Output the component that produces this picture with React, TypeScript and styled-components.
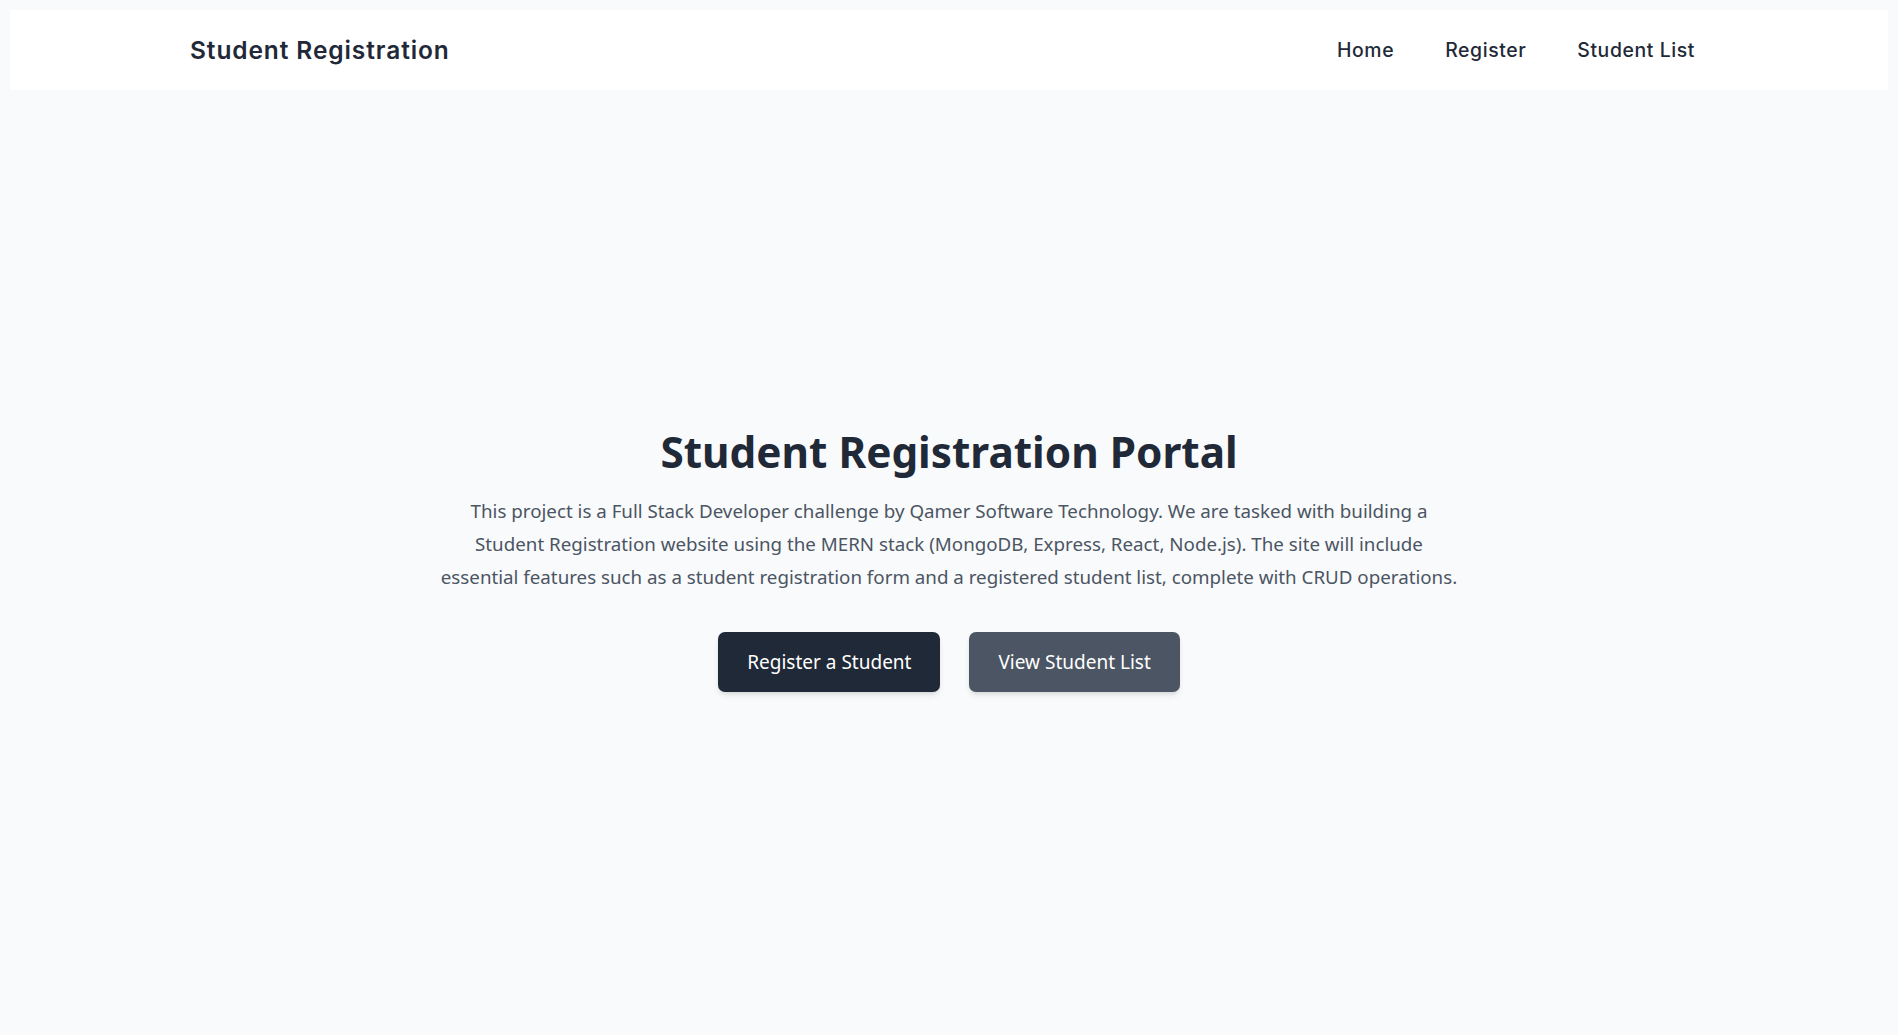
import React from "react";
import styled, { createGlobalStyle } from "styled-components";

const GlobalStyle = createGlobalStyle`
  html, body {
    background: #f9fafb;
  }
  body {
    margin: 10px;
    font-family: "Noto Sans", "Open Sans", sans-serif;
    color: #1f2937;
  }
  * { box-sizing: border-box; }
`;

const Header = styled.header`
  height: 80px;
  background: #ffffff;
  display: flex;
  align-items: center;
`;

const HeaderInner = styled.div`
  width: 100%;
  max-width: 1518px;
  margin: 0 auto;
  display: flex;
  align-items: center;
  justify-content: space-between;
`;

const Brand = styled.a`
  font-family: Inter, "Noto Sans", sans-serif;
  font-weight: 600;
  font-size: 24.5px;
  letter-spacing: 0.9px;
  color: #1f2937;
  text-decoration: none;
`;

const Nav = styled.nav`
  display: flex;
  align-items: center;
  gap: 25px;
`;

const NavLink = styled.a`
  font-family: Inter, "Noto Sans", sans-serif;
  font-weight: 500;
  font-size: 19.4px;
  letter-spacing: 0.6px;
  color: #1f2937;
  text-decoration: none;
  padding: 0 13px;
`;

const Main = styled.main`
  min-height: calc(100vh - 100px);
  padding-top: 5px;
  display: flex;
  align-items: center;
  justify-content: center;
`;

const Hero = styled.section`
  display: flex;
  flex-direction: column;
  align-items: center;
  text-align: center;
`;

const Title = styled.h1`
  margin: 0 0 19px;
  font-family: "Noto Sans", sans-serif;
  font-weight: 700;
  font-size: 42.3px;
  line-height: 48.5px;
  color: #1f2937;
`;

const Lead = styled.p`
  margin: 0;
  max-width: 1030px;
  font-family: "Noto Sans", sans-serif;
  font-size: 18.75px;
  line-height: 32.7px;
  color: #4b5563;
`;

const Actions = styled.div`
  margin-top: 39px;
  display: flex;
  gap: 29px;
`;

const Button = styled.a<{ $variant: "primary" | "secondary" }>`
  display: inline-flex;
  align-items: center;
  justify-content: center;
  height: 60px;
  padding: 0 29px;
  border-radius: 7px;
  font-family: "Noto Sans", sans-serif;
  font-size: 19px;
  color: #ffffff;
  text-decoration: none;
  background: ${(p) => (p.$variant === "primary" ? "#1f2937" : "#4b5563")};
  box-shadow: 0 4px 6px -1px rgba(0, 0, 0, 0.1), 0 2px 4px -2px rgba(0, 0, 0, 0.1);
`;

export default function App() {
  return (
    <>
      <GlobalStyle />
      <Header>
        <HeaderInner>
          <Brand href="#">Student Registration</Brand>
          <Nav>
            <NavLink href="#">Home</NavLink>
            <NavLink href="#">Register</NavLink>
            <NavLink href="#">Student List</NavLink>
          </Nav>
        </HeaderInner>
      </Header>
      <Main>
        <Hero>
          <Title>Student Registration Portal</Title>
          <Lead>
            This project is a Full Stack Developer challenge by Qamer Software Technology. We are tasked with building a
            Student Registration website using the MERN stack (MongoDB, Express, React, Node.js). The site will include
            essential features such as a student registration form and a registered student list, complete with CRUD
            operations.
          </Lead>
          <Actions>
            <Button href="#" $variant="primary">Register a Student</Button>
            <Button href="#" $variant="secondary">View Student List</Button>
          </Actions>
        </Hero>
      </Main>
    </>
  );
}
